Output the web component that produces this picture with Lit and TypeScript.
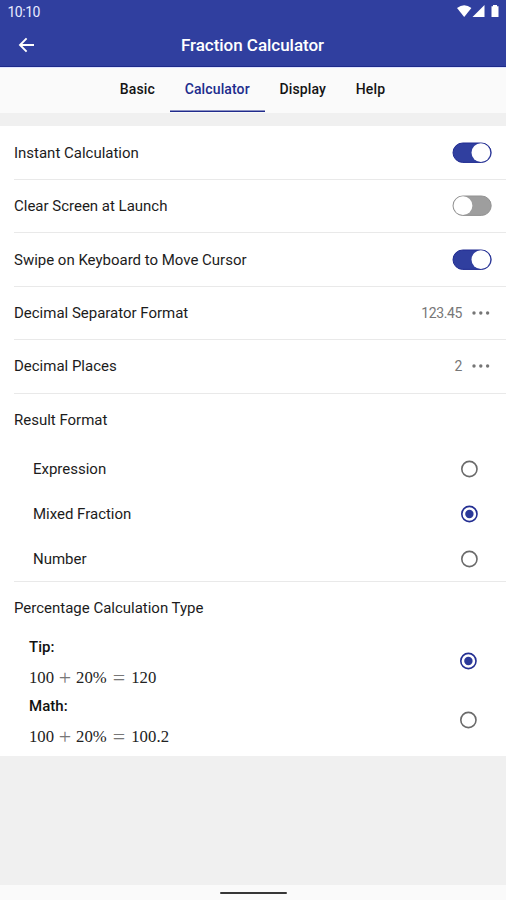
import { LitElement, html, css, svg } from "lit";
import { customElement, property } from "lit/decorators.js";

@customElement("toggle-switch")
class ToggleSwitch extends LitElement {
  @property({ type: Boolean }) on = false;
  static styles = css`
    :host { display: block; width: 40px; height: 22px; }
    svg { display: block; }
    .on { fill: #303f9f; stroke: #202b91; }
    .off { fill: #9e9e9e; stroke: #929292; }
  `;
  render() {
    return html`<svg width="40" height="22" viewBox="0 0 40 22">
      <rect class=${this.on ? "on" : "off"} x="1" y="1" width="38.2" height="19.4" rx="9.7" stroke-width="1" />
      <circle cx=${this.on ? 28.9 : 11} cy="10.7" r="9.4" fill="#fff" />
    </svg>`;
  }
}

@customElement("radio-mark")
class RadioMark extends LitElement {
  @property({ type: Boolean }) on = false;
  static styles = css`
    :host { display: block; width: 18px; height: 18px; }
    svg { display: block; }
  `;
  render() {
    return html`<svg width="18" height="18" viewBox="0 0 18 18">
      <circle cx="9.4" cy="9" r="7.6" fill="none" stroke=${this.on ? "#232e92" : "#6a6a6a"} stroke-width="1.6" />
      ${this.on ? svg`<circle cx="9.4" cy="9" r="4.2" fill="#2b3999" />` : ""}
    </svg>`;
  }
}

@customElement("app-root")
class AppRoot extends LitElement {
  static styles = css`
    :host {
      display: flex; flex-direction: column; width: 506px; height: 900px;
      background: #f0f0f0; color: #1c1c1c; overflow: hidden;
      font: 400 15px/20px Roboto, sans-serif;
    }
    .top { height: 67px; flex: none; background: #303f9f; color: #fff; box-sizing: border-box; border-bottom: 1px solid #1d2a8a; }
    .status { height: 23px; display: flex; justify-content: space-between; padding: 0 7px 0 7.5px; font-size: 14px; line-height: 24px; color: #e8ebff; letter-spacing: -0.5px; }
    .status svg { margin-top: 4px; }
    .bar { height: 43px; display: grid; grid-template-columns: 56px 1fr 56px; align-items: center; }
    .bar svg { margin-left: 18px; }
    .title { text-align: center; font-size: 17px; font-weight: 500; letter-spacing: -0.03px; padding-right: 1px; }
    .tabs { height: 46px; flex: none; background: #fafafa; display: flex; justify-content: center; box-sizing: border-box; border-top: 1px solid #dfe4ff; padding-right: 1px; }
    .tab { height: 44px; box-sizing: border-box; padding: 0 14.9px; line-height: 43px; font-size: 14px; font-weight: 500; letter-spacing: 0.12px; color: #141414; }
    .tab.active { color: #202b8c; border-bottom: 1px solid #202b8c; box-shadow: inset 0 -0.5px #202b8c; }
    .panel { margin-top: 13px; padding-top: 0.7px; height: 630px; box-sizing: border-box; flex: none; background: #fff; }
    .row { height: 53.4px; box-sizing: border-box; margin-left: 14px; padding-right: 14px; display: flex; align-items: center; justify-content: space-between; border-bottom: 1px solid #e9e9e9; letter-spacing: -0.01px; }
    .row.plain { border-color: transparent; }
    .value { display: flex; align-items: center; gap: 9px; font-size: 14px; letter-spacing: -0.4px; color: #777; }
    .value svg { margin-right: 1px; }
    .choices { margin-left: 14px; height: 134.6px; border-bottom: 1px solid #e9e9e9; }
    .choice { height: 45px; display: flex; align-items: center; justify-content: space-between; padding: 0 28px 0 19px; letter-spacing: -0.01px; }
    .choices .choice:first-child { margin-top: -1px; }
    .kind { height: 59px; box-sizing: border-box; padding: 0 29px; display: flex; align-items: center; justify-content: space-between; }
    .kinds { margin-top: -3.6px; }
    .name { margin-top: 3px; font-weight: 500; font-size: 15px; line-height: 20px; letter-spacing: 0.05px; color: #111; }
    .math { margin-top: 11px; height: 20px; display: flex; font: 16.7px/20px "Liberation Serif", serif; color: #222; }
    .op { width: 22px; text-align: center; font-size: 22px; color: #777; }
    .eq { width: 24.5px; }
    .sum { letter-spacing: 0.1px; }
    .fill { flex: 1; }
    .nav { height: 15px; flex: none; background: #fafafa; display: flex; justify-content: center; }
    .pill { width: 67px; height: 2px; margin-top: 7px; border-radius: 1px; background: #363636; }
  `;

  toggleRow(label: string, on: boolean) {
    return html`<div class="row"><span>${label}</span><toggle-switch ?on=${on}></toggle-switch></div>`;
  }
  valueRow(label: string, value: string) {
    return html`<div class="row"><span>${label}</span><span class="value">${value}
      <svg width="20" height="6" viewBox="0 0 20 6" fill="#757575"><circle cx="3" cy="3" r="1.7"/><circle cx="9.8" cy="3" r="1.7"/><circle cx="16.6" cy="3" r="1.7"/></svg></span></div>`;
  }
  choice(label: string, on = false) {
    return html`<div class="choice"><span>${label}</span><radio-mark ?on=${on}></radio-mark></div>`;
  }
  kind(name: string, result: string, on = false) {
    return html`<div class="kind"><div><div class="name">${name}</div>
      <div class="math"><span>100</span><span class="op">+</span><span>20%</span><span class="op eq">=</span><span class="sum">${result}</span></div></div>
      <radio-mark ?on=${on}></radio-mark></div>`;
  }

  render() {
    return html`
      <div class="top">
        <div class="status"><span>10:10</span>
          <svg width="42" height="15" viewBox="0 0 42 15" fill="#fff"><path d="M0 4Q7.2-1.5 14.4 4L7.2 13Z"/><path d="M27.5 1V13H15.5Z"/><path d="M36 1h4v1.2h1.5V13h-7V2.2H36Z"/></svg>
        </div>
        <div class="bar">
          <svg width="17" height="16" viewBox="0 0 17 16" fill="none" stroke="#fff" stroke-width="1.9"><path d="M16 8H2.5M8.6 1.4 2 8l6.6 6.6"/></svg>
          <div class="title">Fraction Calculator</div>
        </div>
      </div>
      <div class="tabs">
        <div class="tab">Basic</div><div class="tab active">Calculator</div><div class="tab">Display</div><div class="tab">Help</div>
      </div>
      <div class="panel">
        ${this.toggleRow("Instant Calculation", true)}
        ${this.toggleRow("Clear Screen at Launch", false)}
        ${this.toggleRow("Swipe on Keyboard to Move Cursor", true)}
        ${this.valueRow("Decimal Separator Format", "123.45")}
        ${this.valueRow("Decimal Places", "2")}
        <div class="row plain">Result Format</div>
        <div class="choices">${this.choice("Expression")}${this.choice("Mixed Fraction", true)}${this.choice("Number")}</div>
        <div class="row plain">Percentage Calculation Type</div>
        <div class="kinds">${this.kind("Tip:", "120", true)}${this.kind("Math:", "100.2")}</div>
      </div>
      <div class="fill"></div>
      <div class="nav"><div class="pill"></div></div>
    `;
  }
}
